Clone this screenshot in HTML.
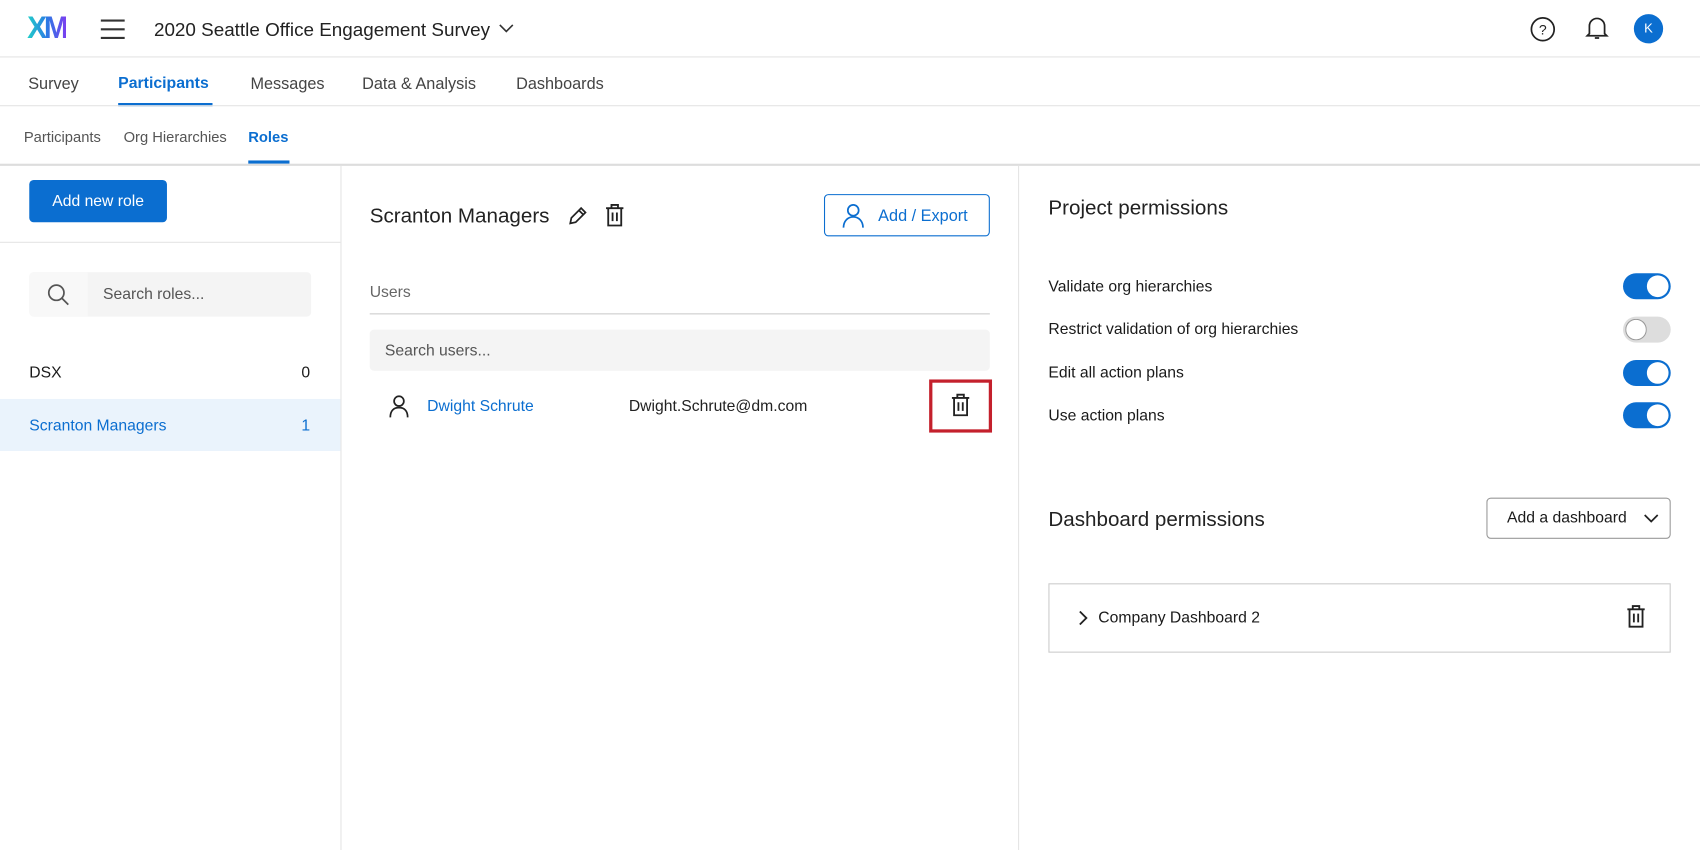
<!DOCTYPE html>
<html><head><meta charset="utf-8"><style>
html,body{margin:0;padding:0;width:1700px;height:850px;overflow:hidden;background:#fff}
#w{position:absolute;left:0;top:0;width:1568px;height:784px;transform:scale(1.08418);transform-origin:0 0;font-family:"Liberation Sans",sans-serif;color:#1a1a1a}
.a{position:absolute;white-space:nowrap}
.tg{position:absolute;left:1497px;width:44px;height:24px;border-radius:12px;background:#0b6ed0}
.tg::after{content:"";position:absolute;right:2px;top:2px;width:20px;height:20px;border-radius:50%;background:#fff}
.tg.off{background:#ddd}
.tg.off::after{left:2px;right:auto;box-shadow:0 0 0 1px #999 inset}
</style></head><body><div id="w">
<div class="a" style="left:25px;top:10px;font-size:29px;font-weight:bold;letter-spacing:-3px;transform:scaleX(0.95);transform-origin:0 0;background:linear-gradient(90deg,#21d0c8,#2a7be4,#7b3ff0);-webkit-background-clip:text;color:transparent">XM</div>
<svg class="a" style="left:92px;top:17px" width="24" height="20"><path d="M1 2h22M1 10h22M1 18h22" stroke="#333" stroke-width="2"/></svg>
<div class="a" style="left:142px;top:17px;font-size:17.4px;color:#222">2020 Seattle Office Engagement Survey</div>
<svg class="a" style="left:460px;top:21px" width="14" height="10"><path d="M1 2l6 6 6-6" stroke="#333" stroke-width="1.5" fill="none"/></svg>
<svg class="a" style="left:1411px;top:15px" width="24" height="24"><circle cx="12" cy="12" r="10.5" stroke="#222" stroke-width="1.6" fill="none"/><text x="12" y="17" font-size="13" text-anchor="middle" font-family="Liberation Sans" fill="#222">?</text></svg>
<svg class="a" style="left:1462px;top:14px" width="22" height="24"><path d="M4 17V10a7 7 0 0 1 14 0v7l2 2H2z M9 21h4" stroke="#222" stroke-width="1.6" fill="none"/></svg>
<div class="a" style="left:1507px;top:13px;width:27px;height:27px;border-radius:50%;background:#0b6ed0;color:#fff;font-size:12px;text-align:center;line-height:27px">K</div>
<div class="a" style="left:0;top:52px;width:1568px;height:1px;background:#e4e4e4"></div>
<div class="a" style="left:26px;top:69px;font-size:15px;color:#444">Survey</div>
<div class="a" style="left:109px;top:69px;font-size:14.6px;color:#0b6ed0;font-weight:bold">Participants</div>
<div class="a" style="left:109px;top:95px;width:87px;height:3px;background:#0b6ed0"></div>
<div class="a" style="left:231px;top:69px;font-size:15px;color:#444">Messages</div>
<div class="a" style="left:334px;top:69px;font-size:15px;color:#444">Data &amp; Analysis</div>
<div class="a" style="left:476px;top:69px;font-size:15px;color:#444">Dashboards</div>
<div class="a" style="left:0;top:97px;width:1568px;height:1px;background:#e4e4e4"></div>
<div class="a" style="left:22px;top:119px;font-size:13.6px;color:#555">Participants</div>
<div class="a" style="left:114px;top:119px;font-size:13.6px;color:#555">Org Hierarchies</div>
<div class="a" style="left:229px;top:119px;font-size:13.6px;color:#0b6ed0;font-weight:bold">Roles</div>
<div class="a" style="left:229px;top:148px;width:38px;height:3px;background:#0b6ed0"></div>
<div class="a" style="left:0;top:151px;width:1568px;height:2px;background:#ddd"></div>
<div class="a" style="left:314px;top:153px;width:1px;height:631px;background:#e4e4e4"></div>
<div class="a" style="left:27px;top:166px;width:127px;height:39px;border-radius:4px;background:#0b6ed0;color:#fff;font-size:14.5px;text-align:center;line-height:40px">Add new role</div>
<div class="a" style="left:0;top:223px;width:314px;height:1px;background:#e4e4e4"></div>
<div class="a" style="left:27px;top:251px;width:260px;height:41px;border-radius:4px;background:#f4f4f4"></div>
<div class="a" style="left:27px;top:251px;width:54px;height:41px;border-radius:4px 0 0 4px;background:#f8f8f8"></div>
<svg class="a" style="left:43px;top:261px" width="22" height="22"><circle cx="9" cy="9" r="7" stroke="#555" stroke-width="1.6" fill="none"/><path d="M14 14l6 6" stroke="#555" stroke-width="1.6"/></svg>
<div class="a" style="left:95px;top:264px;font-size:14.5px;color:#555">Search roles...</div>
<div class="a" style="left:27px;top:336px;font-size:14.5px">DSX</div>
<div class="a" style="left:278px;top:336px;font-size:14.5px">0</div>
<div class="a" style="left:0;top:368px;width:314px;height:48px;background:#eaf3fc"></div>
<div class="a" style="left:27px;top:385px;font-size:14.5px;color:#0b6ed0">Scranton Managers</div>
<div class="a" style="left:278px;top:385px;font-size:14.5px;color:#0b6ed0">1</div>
<div class="a" style="left:939px;top:153px;width:1px;height:631px;background:#e4e4e4"></div>
<div class="a" style="left:341px;top:189px;font-size:19px;color:#222">Scranton Managers</div>
<svg class="a" style="left:523px;top:189px" width="20" height="20"><path d="M3 17l1-5L13 3l4 4-9 9z M11 5l4 4" stroke="#222" stroke-width="1.6" fill="none"/></svg>
<svg class="a" style="left:557px;top:187px" width="20" height="24"><path d="M2 5h16M7 5V2h6v3M4 5v16h12V5M8 9v8M12 9v8" stroke="#222" stroke-width="1.7" fill="none"/></svg>
<div class="a" style="left:760px;top:179px;width:151px;height:37px;border:1px solid #0b6ed0;border-radius:4px"></div>
<svg class="a" style="left:776px;top:187px" width="22" height="24"><circle cx="11" cy="7" r="5" stroke="#0b6ed0" stroke-width="1.6" fill="none"/><path d="M2 23c0-6 4-10 9-10s9 4 9 10" stroke="#0b6ed0" stroke-width="1.6" fill="none"/></svg>
<div class="a" style="left:810px;top:191px;font-size:15px;color:#0b6ed0">Add / Export</div>
<div class="a" style="left:341px;top:262px;font-size:14.5px;color:#666">Users</div>
<div class="a" style="left:341px;top:289px;width:572px;height:1px;background:#ccc"></div>
<div class="a" style="left:341px;top:304px;width:572px;height:38px;border-radius:4px;background:#f4f4f4"></div>
<div class="a" style="left:355px;top:316px;font-size:14.5px;color:#555">Search users...</div>
<svg class="a" style="left:358px;top:364px" width="20" height="22"><circle cx="10" cy="6" r="4.5" stroke="#222" stroke-width="1.6" fill="none"/><path d="M2 21c0-6 3-9 8-9s8 3 8 9" stroke="#222" stroke-width="1.6" fill="none"/></svg>
<div class="a" style="left:394px;top:367px;font-size:14.5px;color:#0b6ed0">Dwight Schrute</div>
<div class="a" style="left:580px;top:367px;font-size:14.5px;color:#222">Dwight.Schrute@dm.com</div>
<div class="a" style="left:857px;top:350px;width:52px;height:43px;border:3px solid #c4202c"></div>
<svg class="a" style="left:876px;top:362px" width="20" height="24"><path d="M2 5h16M7 5V2h6v3M4 5v16h12V5M8 9v8M12 9v8" stroke="#222" stroke-width="1.7" fill="none"/></svg>
<div class="a" style="left:967px;top:182px;font-size:19px;color:#222">Project permissions</div>
<div class="a" style="left:967px;top:257px;font-size:14.5px">Validate org hierarchies</div>
<div class="a" style="left:967px;top:296px;font-size:14.5px">Restrict validation of org hierarchies</div>
<div class="a" style="left:967px;top:336px;font-size:14.5px">Edit all action plans</div>
<div class="a" style="left:967px;top:376px;font-size:14.5px">Use action plans</div>
<div class="tg" style="top:252px"></div>
<div class="tg off" style="top:292px"></div>
<div class="tg" style="top:332px"></div>
<div class="tg" style="top:371px"></div>
<div class="a" style="left:967px;top:469px;font-size:19px;color:#222">Dashboard permissions</div>
<div class="a" style="left:1371px;top:459px;width:168px;height:36px;border:1px solid #999;border-radius:4px"></div>
<div class="a" style="left:1390px;top:470px;font-size:14.5px">Add a dashboard</div>
<svg class="a" style="left:1516px;top:473px" width="14" height="10"><path d="M1 2l6 6 6-6" stroke="#222" stroke-width="1.6" fill="none"/></svg>
<div class="a" style="left:967px;top:538px;width:572px;height:62px;border:1px solid #ccc"></div>
<svg class="a" style="left:994px;top:563px" width="10" height="14"><path d="M2 1l6 6-6 6" stroke="#222" stroke-width="1.7" fill="none"/></svg>
<div class="a" style="left:1013px;top:562px;font-size:14.5px">Company Dashboard 2</div>
<svg class="a" style="left:1499px;top:557px" width="20" height="24"><path d="M2 5h16M7 5V2h6v3M4 5v16h12V5M8 9v8M12 9v8" stroke="#222" stroke-width="1.7" fill="none"/></svg>
</div></body></html>
